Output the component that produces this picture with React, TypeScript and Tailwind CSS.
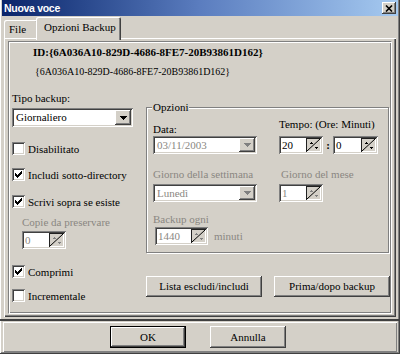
import React from 'react';

// classic 3D edges
const raised =
  "shadow-[inset_-1px_-1px_#404040,inset_1px_1px_#ffffff,inset_-2px_-2px_#808080,inset_2px_2px_#d4d0c8]";
const sunken =
  "shadow-[inset_1px_1px_#808080,inset_-1px_-1px_#ffffff,inset_2px_2px_#404040,inset_-2px_-2px_#d4d0c8]";
const grey = "text-[#8a8782]";

const CheckMark = () => (
  <svg width="7" height="7" viewBox="0 0 7 7" shapeRendering="crispEdges">
    <rect x="6" y="0" width="1" height="3" fill="#000" />
    <rect x="5" y="1" width="1" height="3" fill="#000" />
    <rect x="4" y="2" width="1" height="3" fill="#000" />
    <rect x="3" y="3" width="1" height="3" fill="#000" />
    <rect x="2" y="4" width="1" height="3" fill="#000" />
    <rect x="1" y="3" width="1" height="3" fill="#000" />
    <rect x="0" y="2" width="1" height="3" fill="#000" />
  </svg>
);

const Check = ({ label, checked, className = "" }: { label: string; checked?: boolean; className?: string }) => (
  <div className={`flex items-center h-[13px] ${className}`}>
    <div className={`w-[13px] h-[13px] shrink-0 bg-white ${sunken} flex items-center justify-center`}>
      {checked && <CheckMark />}
    </div>
    <span className="ml-[3px] leading-[14px] whitespace-nowrap">{label}</span>
  </div>
);

const DropBtn = ({ disabled, h }: { disabled?: boolean; h: string }) => (
  <div className={`w-[16px] ${h} shrink-0 bg-[#d4d0c8] ${raised} flex items-center justify-center`}>
    <svg width="7" height="4" viewBox="0 0 7 4" shapeRendering="crispEdges">
      <polygon points="0,0 7,0 3.5,4" fill={disabled ? "#808080" : "#000"} />
    </svg>
  </div>
);

const Combo = ({ value, w, h, btnH, disabled }: { value: string; w: string; h: string; btnH: string; disabled?: boolean }) => (
  <div className={`${w} ${h} bg-white ${sunken} flex items-center p-[2px]`}>
    <span className={`flex-1 pl-[2px] leading-none whitespace-nowrap ${disabled ? grey : ""}`}>{value}</span>
    <DropBtn disabled={disabled} h={btnH} />
  </div>
);

const SpinBtn = ({ disabled }: { disabled?: boolean }) => (
  <svg width="15" height="14" viewBox="0 0 15 14" shapeRendering="crispEdges" className="shrink-0">
    <rect x="0" y="0" width="15" height="14" fill="#d4d0c8" />
    <path d="M0.5 14 V0.5 H15" stroke="#202020" fill="none" />
    <path d="M1 13.5 H14.5 V1" stroke="#ffffff" fill="none" />
    <line x1="1" y1="13" x2="14" y2="1" stroke="#000" shapeRendering="auto" />
    <polygon points="3,6 5,4 7,6" fill={disabled ? "#808080" : "#000"} />
    <polygon points="8,9 12,9 10,11" fill={disabled ? "#808080" : "#000"} />
  </svg>
);

const Spin = ({ value, w, disabled }: { value: string; w: string; disabled?: boolean }) => (
  <div className={`${w} h-[18px] bg-white ${sunken} flex items-center p-[2px]`}>
    <span className={`flex-1 pl-[1px] leading-none ${disabled ? grey : ""}`}>{value}</span>
    <SpinBtn disabled={disabled} />
  </div>
);

export default function App() {
  return (
    <div className="w-[400px] h-[354px] bg-[#d4d0c8] flex flex-col px-[2px] font-['Liberation_Serif',serif] text-[11px] text-black overflow-hidden shadow-[inset_-1px_-1px_#404040,inset_1px_0_#ffffff,inset_-2px_-2px_#808080]">
      {/* title bar */}
      <div className="h-[16px] bg-linear-to-r from-[#0a246a] via-[#5b7dbf] to-[#a6caf0] flex items-center pl-[2px] pr-[2px]">
        <span className="flex-1 font-['Liberation_Sans',sans-serif] font-bold text-[10.5px] tracking-[-0.3px] text-white leading-none">
          Nuova voce
        </span>
        <div className={`w-[14px] h-[12px] bg-[#d4d0c8] ${raised} flex items-center justify-center`}>
          <svg width="8" height="7" viewBox="0 0 8 7">
            <path d="M1 0.5 L7 6.5 M7 0.5 L1 6.5" stroke="#000" strokeWidth="1.6" />
          </svg>
        </div>
      </div>

      {/* tabs */}
      <div className="h-[21px] mt-[1px] flex items-end pl-[2px]">
        <div className="w-[34px] h-[18px] rounded-t-[2px] shadow-[inset_1px_1px_#ffffff,inset_-1px_0_#404040,inset_-2px_0_#808080] flex items-center pl-[5px]">
          File
        </div>
        <div className="relative z-10 -ml-[2px] -mb-[2px] w-[85px] h-[23px] bg-[#d4d0c8] rounded-t-[2px] shadow-[inset_1px_1px_#ffffff,inset_-1px_0_#404040,inset_-2px_0_#808080] flex items-start pt-[3px] pl-[8px]">
          <span className="leading-[14px]">Opzioni Backup</span>
        </div>
      </div>

      {/* tab panel */}
      <div className="ml-[2px] w-[392px] h-[279px] pl-[4px] pt-[3px] shadow-[inset_1px_1px_#ffffff,inset_-1px_-1px_#404040,inset_-2px_-2px_#808080]">
        <div className="w-[384px] h-[273px] border border-[#808080] border-r-white border-b-white shadow-[inset_1px_1px_#ffffff,inset_-1px_-1px_#808080] pt-[3px]">
          <div className="pl-[24px] h-[14px] leading-[14px] font-bold">ID:{"{6A036A10-829D-4686-8FE7-20B93861D162}"}</div>
          <div className="pl-[26px] mt-[6px] h-[14px] leading-[14px] text-[10px]">{"{6A036A10-829D-4686-8FE7-20B93861D162}"}</div>

          <div className="flex mt-[12px]">
            {/* left column */}
            <div className="ml-[3px] w-[134px] flex flex-col">
              <div className="h-[14px] leading-[14px]">Tipo backup:</div>
              <div className="mt-[3px]">
                <Combo value="Giornaliero" w="w-[121px]" h="h-[19px]" btnH="h-[15px]" />
              </div>
              <Check className="mt-[15px]" label="Disabilitato" />
              <Check className="mt-[13px]" label="Includi sotto-directory" checked />
              <Check className="mt-[14px]" label="Scrivi sopra se esiste" checked />
              <div className={`mt-[7px] pl-[10px] h-[14px] leading-[14px] ${grey}`}>Copie da preservare</div>
              <div className="mt-[2px] ml-[10px]">
                <Spin value="0" w="w-[44px]" disabled />
              </div>
              <Check className="mt-[16px]" label="Comprimi" checked />
              <Check className="mt-[11px]" label="Incrementale" />
            </div>

            {/* right column */}
            <div className="w-[244px] flex flex-col">
              <div className="relative mt-[16px] w-[243px] border border-[#808080] shadow-[inset_1px_1px_#ffffff,1px_1px_#ffffff] pt-[1px] pl-[6px] pb-[7px]">
                <span className="absolute -top-[8px] left-[5px] px-[1px] bg-[#d4d0c8] leading-[14px]">Opzioni</span>
                <div className="flex h-[27px]">
                  <div className="w-[104px] flex flex-col justify-end">
                    <span className="leading-[14px]">Data:</span>
                  </div>
                  <div className="ml-[22px] flex flex-col justify-end pb-[5px]">
                    <span className="leading-[14px] whitespace-nowrap">Tempo: (Ore: Minuti)</span>
                  </div>
                </div>
                <div className="flex h-[18px]">
                  <Combo value="03/11/2003" w="w-[104px]" h="h-[18px]" btnH="h-[14px]" disabled />
                  <div className="ml-[22px] flex items-center">
                    <Spin value="20" w="w-[44px]" />
                    <span className="w-[10px] text-center font-bold leading-none">:</span>
                    <Spin value="0" w="w-[45px]" />
                  </div>
                </div>
                <div className={`flex mt-[13px] h-[14px] leading-[14px] ${grey}`}>
                  <span className="w-[104px] whitespace-nowrap">Giorno della settimana</span>
                  <span className="ml-[24px] whitespace-nowrap">Giorno del mese</span>
                </div>
                <div className="flex mt-[3px] h-[18px]">
                  <Combo value="Lunedì" w="w-[104px]" h="h-[18px]" btnH="h-[14px]" disabled />
                  <div className="ml-[22px]">
                    <Spin value="1" w="w-[44px]" disabled />
                  </div>
                </div>
                <div className={`mt-[10px] h-[14px] leading-[14px] ${grey}`}>Backup ogni</div>
                <div className="mt-[1px] ml-[2px] flex items-center h-[18px]">
                  <Spin value="1440" w="w-[53px]" disabled />
                  <span className={`ml-[6px] ${grey}`}>minuti</span>
                </div>
              </div>

              <div className="flex mt-[23px]">
                <button className={`w-[116px] h-[21px] bg-[#d4d0c8] ${raised} leading-none`}>Lista escludi/includi</button>
                <button className={`ml-[12px] w-[116px] h-[21px] bg-[#d4d0c8] ${raised} leading-none`}>Prima/dopo backup</button>
              </div>
            </div>
          </div>
        </div>
      </div>

      {/* bottom */}
      <div className="mt-[2px] h-[2px] bg-[#404040] -mx-[2px]"></div>
      <div className="mt-[1px] mx-[1px] h-[30px] shadow-[inset_1px_1px_#ffffff,inset_-1px_-1px_#808080] flex items-center pl-[107px]">
        <button className={`w-[76px] h-[22px] bg-[#d4d0c8] border border-black shadow-[inset_-1px_-1px_#404040,inset_1px_1px_#ffffff,inset_-2px_-2px_#808080] leading-none`}>
          OK
        </button>
        <button className={`ml-[24px] w-[76px] h-[22px] bg-[#d4d0c8] ${raised} leading-none`}>Annulla</button>
      </div>
    </div>
  );
}
